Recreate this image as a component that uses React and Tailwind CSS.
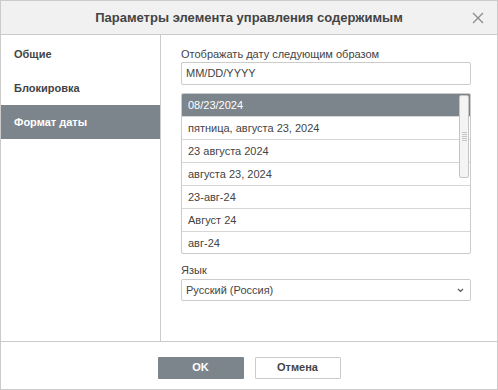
import React from 'react';

const formats = [
  '08/23/2024',
  'пятница, августа 23, 2024',
  '23 августа 2024',
  'августа 23, 2024',
  '23-авг-24',
  'Август 24',
  'авг-24',
];

const tabs = ['Общие', 'Блокировка', 'Формат даты'];

export default function App() {
  const active = 2;
  const selected = 0;

  return (
    <div
      className="flex h-[390px] w-[498px] flex-col border border-[#cbcbcb] bg-white text-[11px] text-[#444]"
      style={{ fontFamily: '"Liberation Sans", Arial, sans-serif' }}
    >
      {/* Title bar */}
      <div className="relative flex h-[34px] shrink-0 items-center justify-center border-b border-[#cbcbcb] bg-[#f1f1f1]">
        <span className="text-[13px] font-bold text-[#444]">Параметры элемента управления содержимым</span>
        <svg className="absolute right-[13px] top-[11px]" width="12" height="12" viewBox="0 0 12 12">
          <path d="M1 1L11 11M11 1L1 11" stroke="#8a8a8a" strokeWidth="1.2" />
        </svg>
      </div>

      {/* Body */}
      <div className="flex min-h-0 flex-1 border-b border-[#cbcbcb]">
        <div className="w-[160px] shrink-0 border-r border-[#cbcbcb] pt-[2px]">
          {tabs.map((t, i) => (
            <div
              key={t}
              className={`flex h-[34px] items-center pl-[13px] font-bold ${
                i === active ? 'bg-[#7d858c] text-white' : 'text-[#444]'
              }`}
            >
              {t}
            </div>
          ))}
        </div>

        <div className="flex-1 pl-[20px] pr-[26px] pt-[12px]">
          <div className="leading-[14px]">Отображать дату следующим образом</div>
          <div className="mt-[1px] flex h-[23px] items-center rounded-[2px] border border-[#cbcbcb] px-[4px] text-[11px]">
            MM/DD/YYYY
          </div>

          <div className="relative mt-[8px] h-[161px] overflow-hidden rounded-[2px] border border-[#cbcbcb]">
            {formats.map((f, i) => (
              <div
                key={f}
                className={`flex items-center px-[6px] ${
                  i === selected ? 'h-[22px] bg-[#7d858c] text-white' : 'h-[23px] border-t border-[#d6d6d6] text-[#444]'
                }`}
              >
                {f}
              </div>
            ))}
            <div className="absolute right-[1px] top-[1px] flex h-[83px] w-[10px] items-center justify-center rounded-[2px] border border-[#c4c4c4] bg-[#f4f4f4]">
              <div className="flex flex-col gap-[1px]">
                {[0, 1, 2, 3, 4].map((k) => (
                  <div key={k} className="h-px w-[5px] bg-[#c4c4c4]" />
                ))}
              </div>
            </div>
          </div>

          <div className="mt-[9px] leading-[14px]">Язык</div>
          <div className="mt-[2px] flex h-[22px] items-center justify-between rounded-[2px] border border-[#cbcbcb] pl-[4px] pr-[6px]">
            <span>Русский (Россия)</span>
            <svg width="7" height="5" viewBox="0 0 7 5">
              <path d="M1 1L3.5 3.5L6 1" stroke="#555" strokeWidth="1.2" fill="none" />
            </svg>
          </div>
        </div>
      </div>

      {/* Footer */}
      <div className="flex h-[47px] shrink-0 items-center justify-center gap-[11px] pt-[4px]">
        <button className="h-[22px] w-[86px] rounded-[1px] bg-[#7d858c] text-[11px] font-bold text-white">OK</button>
        <button className="h-[22px] w-[86px] rounded-[1px] border border-[#cbcbcb] bg-white text-[11px] font-bold text-[#444]">
          Отмена
        </button>
      </div>
    </div>
  );
}
